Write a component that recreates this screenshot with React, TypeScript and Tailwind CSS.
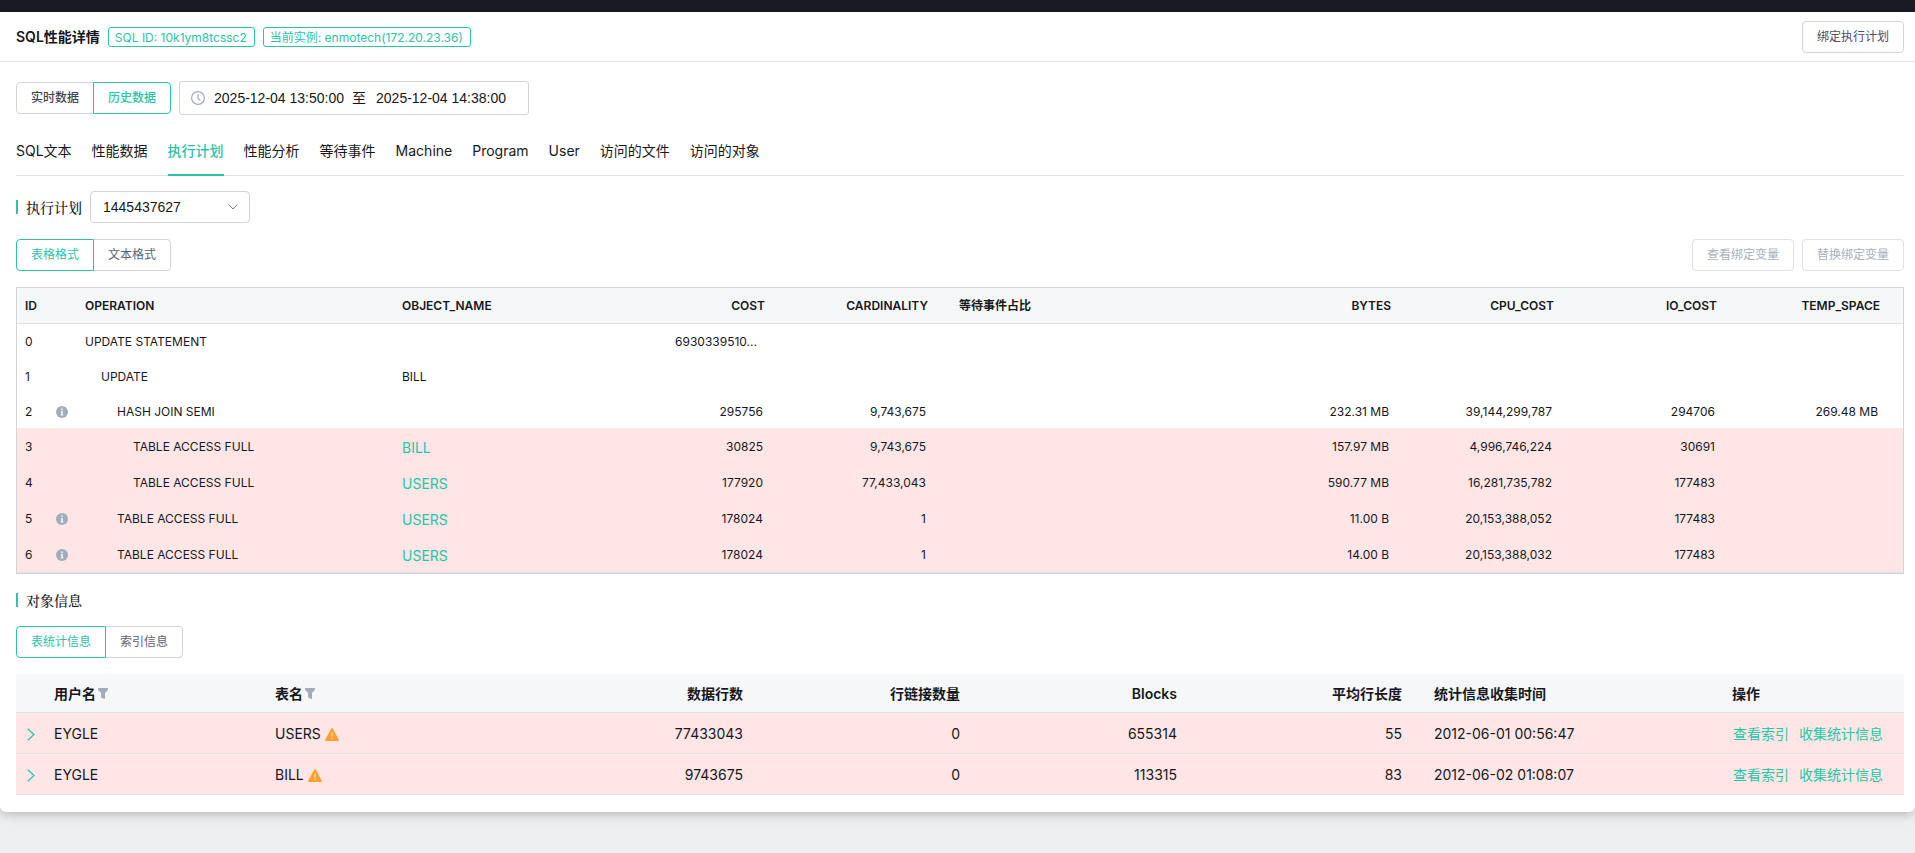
import { useState } from "react";
import { clsx } from "clsx";

const tabs = ["SQL文本", "性能数据", "执行计划", "性能分析", "等待事件", "Machine", "Program", "User", "访问的文件", "访问的对象"];

type PlanRow = {
  id: number;
  info?: boolean;
  operation: string;
  indent: string;
  object?: string;
  cost?: string;
  cardinality?: string;
  bytes?: string;
  cpu?: string;
  io?: string;
  temp?: string;
  warn?: boolean;
};

const planRows: PlanRow[] = [
  { id: 0, operation: "UPDATE STATEMENT", indent: "pl-2", cost: "6930339510..." },
  { id: 1, operation: "UPDATE", indent: "pl-6", object: "BILL" },
  { id: 2, info: true, operation: "HASH JOIN SEMI", indent: "pl-10", cost: "295756", cardinality: "9,743,675", bytes: "232.31 MB", cpu: "39,144,299,787", io: "294706", temp: "269.48 MB" },
  { id: 3, operation: "TABLE ACCESS FULL", indent: "pl-14", object: "BILL", cost: "30825", cardinality: "9,743,675", bytes: "157.97 MB", cpu: "4,996,746,224", io: "30691", warn: true },
  { id: 4, operation: "TABLE ACCESS FULL", indent: "pl-14", object: "USERS", cost: "177920", cardinality: "77,433,043", bytes: "590.77 MB", cpu: "16,281,735,782", io: "177483", warn: true },
  { id: 5, info: true, operation: "TABLE ACCESS FULL", indent: "pl-10", object: "USERS", cost: "178024", cardinality: "1", bytes: "11.00 B", cpu: "20,153,388,052", io: "177483", warn: true },
  { id: 6, info: true, operation: "TABLE ACCESS FULL", indent: "pl-10", object: "USERS", cost: "178024", cardinality: "1", bytes: "14.00 B", cpu: "20,153,388,032", io: "177483", warn: true },
];

const objectRows = [
  { user: "EYGLE", table: "USERS", rows: "77433043", chained: "0", blocks: "655314", avg: "55", time: "2012-06-01 00:56:47" },
  { user: "EYGLE", table: "BILL", rows: "9743675", chained: "0", blocks: "113315", avg: "83", time: "2012-06-02 01:08:07" },
];

function ClockIcon() {
  return (
    <svg viewBox="0 0 14 14" className="size-[14px] shrink-0" fill="none" stroke="#a3abbb" strokeWidth="1.2" aria-hidden="true">
      <circle cx="7" cy="7" r="6.4" />
      <path d="M7 3.2V7.2L9 9.4" />
    </svg>
  );
}

function InfoIcon() {
  return (
    <svg viewBox="0 0 12 12" className="block size-3" aria-hidden="true">
      <circle cx="6" cy="6" r="6" fill="#a3adba" />
      <path d="M5.3 2.6h1.4v1.3H5.3zM4.8 4.9h1.9v3.6h.6v.9H4.7v-.9h.6V5.7h-.5z" fill="#fff" />
    </svg>
  );
}

function FilterIcon() {
  return (
    <svg viewBox="0 0 10 11" className="ml-0.5 h-[11px] w-[10px]" fill="#a3adba" aria-hidden="true">
      <path d="M.4 0h9.2c.4 0 .6.5.3.9V2L7 5v5.6c0 .3-.2.4-.5.3L3.4 9.8a.5.5 0 0 1-.3-.4V5L.1 2V.9C-.1.5 0 0 .4 0z" />
    </svg>
  );
}

function WarningIcon() {
  return (
    <svg viewBox="0 0 14 13" className="ml-1 h-[13px] w-[14px]" aria-hidden="true">
      <path d="M6.3.5a.8.8 0 0 1 1.4 0l6.1 11.3a.8.8 0 0 1-.7 1.2H.9a.8.8 0 0 1-.7-1.2z" fill="#ff9f2e" />
      <path d="M6.4 4.6h1.2v4H6.4zM6.4 9.7h1.2v1.3H6.4z" fill="#ffe3c2" />
    </svg>
  );
}

function Tag({ children }: { children: string }) {
  return (
    <span className="h-5 rounded-[3px] border border-[#2bc4a5] pr-[7px] pl-1.5 text-xs leading-5 text-[#2bc4a5]">{children}</span>
  );
}

function ButtonGroup({ options, defaultIndex, dark }: { options: string[]; defaultIndex: number; dark?: boolean }) {
  const [active, setActive] = useState(defaultIndex);
  return (
    <div className="flex">
      {options.map((label, i) => (
        <button
          key={label}
          type="button"
          onClick={() => setActive(i)}
          className={clsx(
            "h-8 border px-[14px] text-xs",
            i === 0 ? "rounded-l" : "-ml-px rounded-r",
            i === active ? "z-10 border-[#2bc4a5] text-[#2bc4a5]" : "border-[#d2d4d6]",
            dark && "font-medium",
            i !== active && (dark ? "text-[#3f4554]" : "text-[#5c6170]")
          )}
        >
          {label}
        </button>
      ))}
    </div>
  );
}

function SectionTitle({ children }: { children: string }) {
  return (
    <h2 className="flex items-center gap-2 font-['Noto_Serif_CJK_SC','Noto_Sans_CJK_SC',serif] text-sm leading-5 font-medium">
      <span className="h-[14px] w-0.5 bg-[#2bc4a5]" />
      {children}
    </h2>
  );
}

export default function App() {
  const [tab, setTab] = useState("执行计划");

  return (
    <div className="min-h-screen bg-[#eeeff1] font-['Inter','Noto_Sans_CJK_SC',sans-serif] text-[#16171c]">
      <div className="h-3 bg-[#1b1b25]" />
      <main className="rounded-b-md bg-white pb-[17px] shadow-[0_2px_12px_rgba(0,0,0,0.25)]">
        <header className="flex h-[50px] items-center justify-between border-b border-[#e0e1e3] pr-[11px] pl-4">
          <div className="flex items-center gap-2">
            <h1 className="text-sm font-semibold">SQL性能详情</h1>
            <Tag>SQL ID: 10k1ym8tcssc2</Tag>
            <Tag>当前实例: enmotech(172.20.23.36)</Tag>
          </div>
          <button type="button" className="h-8 rounded border border-[#d2d4d6] px-[14px] text-xs text-[#4b5060]">绑定执行计划</button>
        </header>

        <div className="pr-[11px] pl-4">
          <div className="flex items-center gap-2 pt-[19px]">
            <ButtonGroup options={["实时数据", "历史数据"]} defaultIndex={1} dark />
            <div className="flex h-[34px] w-[350px] items-center rounded-[3px] border border-[#d2d4d6] pl-[11px] font-['Liberation_Sans','Noto_Sans_CJK_SC',sans-serif] text-sm">
              <ClockIcon />
              <input aria-label="开始时间" defaultValue="2025-12-04 13:50:00" className="ml-[9px] w-[134px] outline-none" />
              <span className="ml-1">至</span>
              <input aria-label="结束时间" defaultValue="2025-12-04 14:38:00" className="ml-2.5 w-[134px] outline-none" />
            </div>
          </div>

          <nav className="mt-3 flex h-[49px] gap-5 border-b border-[#e0e1e3]">
            {tabs.map((name) => (
              <button
                key={name}
                type="button"
                onClick={() => setTab(name)}
                className={clsx("-mb-px border-b-2 text-sm", tab === name ? "border-[#2bc4a5] font-medium text-[#2bc4a5]" : "border-transparent")}
              >
                {name}
              </button>
            ))}
          </nav>

          <div className="mt-[15px] flex items-center gap-2">
            <SectionTitle>执行计划</SectionTitle>
            <div className="relative">
              <select aria-label="执行计划" className="h-8 w-40 appearance-none rounded border border-[#d2d4d6] bg-white pl-3 font-['Liberation_Sans',sans-serif] text-sm">
                <option>1445437627</option>
              </select>
              <svg viewBox="0 0 10 6" className="pointer-events-none absolute top-[13px] right-3 h-1.5 w-2.5" fill="none" stroke="#737886" aria-hidden="true">
                <path d="M.8.6 5 5 9.2.6" />
              </svg>
            </div>
          </div>

          <div className="mt-4 flex justify-between">
            <ButtonGroup options={["表格格式", "文本格式"]} defaultIndex={0} />
            <div className="flex gap-2">
              <button type="button" disabled className="h-8 rounded border border-[#e0e1e3] px-[14px] text-xs text-[#aab0bd]">查看绑定变量</button>
              <button type="button" disabled className="h-8 rounded border border-[#e0e1e3] px-[14px] text-xs text-[#aab0bd]">替换绑定变量</button>
            </div>
          </div>

          <div className="mt-4 border border-[#d2d4d6]">
            <table className="w-full table-fixed border-b border-[#e0e1e3] text-xs">
              <colgroup>
                <col className="w-[34px]" />
                <col className="w-[26px]" />
                <col className="w-[317px]" />
                <col className="w-[231px]" />
                <col className="w-[163px]" />
                <col className="w-[163px]" />
                <col />
                <col className="w-[163px]" />
                <col className="w-[163px]" />
                <col className="w-[163px]" />
                <col className="w-[163px]" />
              </colgroup>
              <thead>
                <tr className="h-[35px] border-b border-[#e0e1e3] bg-[#f5f7f9] text-right *:pt-0.5 *:font-semibold">
                  <th className="pl-2 text-left">ID</th>
                  <th></th>
                  <th className="pl-2 text-left">OPERATION</th>
                  <th className="pl-2 text-left">OBJECT_NAME</th>
                  <th className="pr-[23px]">COST</th>
                  <th className="pr-[23px]">CARDINALITY</th>
                  <th className="pl-2 text-left">等待事件占比</th>
                  <th className="pr-[23px]">BYTES</th>
                  <th className="pr-[23px]">CPU_COST</th>
                  <th className="pr-[23px]">IO_COST</th>
                  <th className="pr-[23px]">TEMP_SPACE</th>
                </tr>
              </thead>
              <tbody>
                {planRows.map((r) => (
                  <tr key={r.id} className={clsx("text-right *:pt-0.5", r.warn ? "h-9 bg-[#fee6e6]" : "h-[35px]")}>
                    <td className="pl-2 text-left">{r.id}</td>
                    <td className="pl-[5px]">{r.info && <InfoIcon />}</td>
                    <td className={clsx("text-left", r.indent)}>{r.operation}</td>
                    <td className={clsx("pl-2 text-left", r.warn && "pt-1!")}>
                      {r.warn ? <a href="#" className="text-sm text-[#2bc4a5]">{r.object}</a> : r.object}
                    </td>
                    <td className={r.id === 0 ? "pr-[31px]" : "pr-[25px]"}>{r.cost}</td>
                    <td className="pr-[25px]">{r.cardinality}</td>
                    <td></td>
                    <td className="pr-[25px]">{r.bytes}</td>
                    <td className="pr-[25px]">{r.cpu}</td>
                    <td className="pr-[25px]">{r.io}</td>
                    <td className="pr-[25px]">{r.temp}</td>
                  </tr>
                ))}
              </tbody>
            </table>
          </div>

          <div className="mt-4">
            <SectionTitle>对象信息</SectionTitle>
          </div>
          <div className="mt-4">
            <ButtonGroup options={["表统计信息", "索引信息"]} defaultIndex={0} />
          </div>

          <table className="mt-4 w-full table-fixed text-sm">
            <colgroup>
              <col className="w-[22px]" />
              <col className="w-[221px]" />
              <col />
              <col className="w-[217px]" />
              <col className="w-[217px]" />
              <col className="w-[217px]" />
              <col className="w-[225px]" />
              <col className="w-[298px]" />
              <col className="w-[188px]" />
            </colgroup>
            <thead>
              <tr className="h-[39px] border-b border-[#e0e1e3] bg-[#f5f7f9] text-right *:px-4 *:pt-0.5 *:font-semibold">
                <th></th>
                <th>
                  <span className="flex items-center">用户名<FilterIcon /></span>
                </th>
                <th>
                  <span className="flex items-center">表名<FilterIcon /></span>
                </th>
                <th>数据行数</th>
                <th>行链接数量</th>
                <th>Blocks</th>
                <th>平均行长度</th>
                <th className="text-left">统计信息收集时间</th>
                <th className="text-left">操作</th>
              </tr>
            </thead>
            <tbody>
              {objectRows.map((r) => (
                <tr key={r.table} className="h-[41px] border-b border-[#e0e1e3] bg-[#fee6e6] text-right *:pt-0.5">
                  <td className="pl-[11px]">
                    <button type="button" aria-label="展开" className="block">
                      <svg viewBox="0 0 8 13" className="h-[13px] w-2" fill="none" stroke="#2bc4a5" strokeWidth="1.2" aria-hidden="true">
                        <path d="M.8.7 7 6.5.8 12.3" />
                      </svg>
                    </button>
                  </td>
                  <td className="px-4 text-left">{r.user}</td>
                  <td className="px-4">
                    <span className="flex items-center">{r.table}<WarningIcon /></span>
                  </td>
                  <td className="px-4">{r.rows}</td>
                  <td className="px-4">{r.chained}</td>
                  <td className="px-4">{r.blocks}</td>
                  <td className="px-4">{r.avg}</td>
                  <td className="px-4 text-left">{r.time}</td>
                  <td className="pl-[17px]">
                    <span className="flex gap-2.5 whitespace-nowrap text-[#2bc4a5]">
                      <a href="#">查看索引</a>
                      <a href="#">收集统计信息</a>
                    </span>
                  </td>
                </tr>
              ))}
            </tbody>
          </table>
        </div>
      </main>
    </div>
  );
}
